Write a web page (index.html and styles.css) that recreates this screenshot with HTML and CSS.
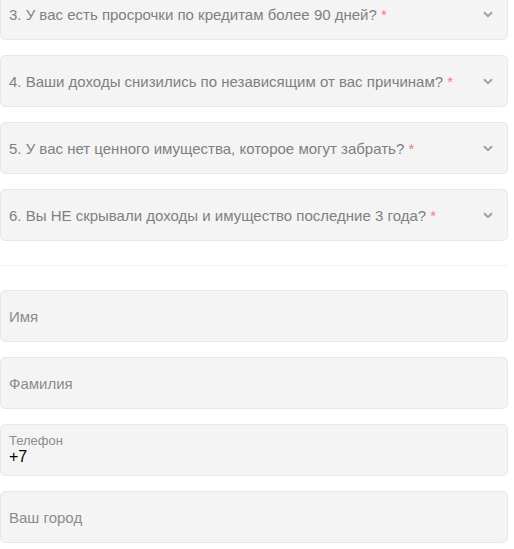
FILE: index.html
```html
<!DOCTYPE html>
<html lang="ru">
<head>
<meta charset="utf-8">
<link rel="stylesheet" href="styles.css">
</head>
<body>
<div class="form">
  <div class="group">
    <div class="select"><span class="q">3. У вас есть просрочки по кредитам более 90 дней? <span class="req">*</span></span><svg class="chev" width="10" height="7" viewBox="0 0 10 7"><path d="M1 1.2 L5 5.2 L9 1.2" fill="none" stroke="#a0a0a0" stroke-width="2"/></svg></div>
    <div class="select"><span class="q">4. Ваши доходы снизились по независящим от вас причинам? <span class="req">*</span></span><svg class="chev" width="10" height="7" viewBox="0 0 10 7"><path d="M1 1.2 L5 5.2 L9 1.2" fill="none" stroke="#a0a0a0" stroke-width="2"/></svg></div>
    <div class="select"><span class="q">5. У вас нет ценного имущества, которое могут забрать? <span class="req">*</span></span><svg class="chev" width="10" height="7" viewBox="0 0 10 7"><path d="M1 1.2 L5 5.2 L9 1.2" fill="none" stroke="#a0a0a0" stroke-width="2"/></svg></div>
    <div class="select"><span class="q">6. Вы НЕ скрывали доходы и имущество последние 3 года? <span class="req">*</span></span><svg class="chev" width="10" height="7" viewBox="0 0 10 7"><path d="M1 1.2 L5 5.2 L9 1.2" fill="none" stroke="#a0a0a0" stroke-width="2"/></svg></div>
  </div>
  <div class="divider"></div>
  <div class="group">
    <div class="field"><span class="ph">Имя</span></div>
    <div class="field"><span class="ph">Фамилия</span></div>
    <div class="field filled"><span class="label">Телефон</span><span class="value">+7</span></div>
    <div class="field"><span class="ph">Ваш город</span></div>
  </div>
</div>
</body>
</html>
```
FILE: styles.css
```css
html, body {
  margin: 0;
  padding: 0;
  background: #ffffff;
}
body {
  font-family: Arial, "Liberation Sans", sans-serif;
  overflow: hidden;
}
.form {
  width: 508px;
  margin-top: -12px;
}
.group {
  display: flex;
  flex-direction: column;
  gap: 15px;
}
.select, .field {
  box-sizing: border-box;
  height: 52px;
  background: #f4f4f4;
  border: 1px solid #e8e8e8;
  border-radius: 5px;
  padding: 0 8px;
  display: flex;
  align-items: center;
}
.select {
  justify-content: space-between;
  padding-right: 14px;
}
.q {
  font-size: 15px;
  color: #808080;
}
.req {
  color: #f47c7c;
}
.chev {
  display: block;
}
.divider {
  height: 1px;
  background: #f2f2f2;
  margin: 24px 0;
}
.ph {
  font-size: 15px;
  color: #8c8c8c;
}
.field.filled {
  flex-direction: column;
  align-items: flex-start;
  justify-content: center;
  padding-bottom: 2px;
}
.label {
  font-size: 13px;
  color: #8c8c8c;
  line-height: 15px;
}
.value {
  font-size: 16px;
  color: #000;
  line-height: 18px;
}
```
